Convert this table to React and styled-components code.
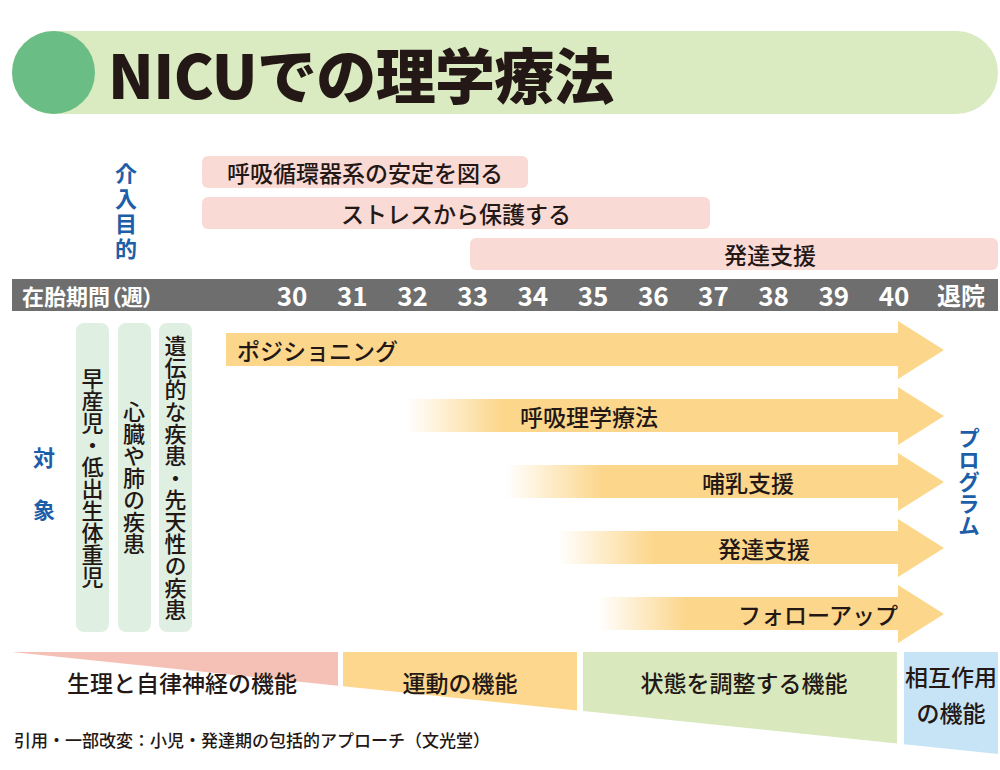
import React from 'react';
import styled, { createGlobalStyle } from 'styled-components';

const ORANGE = '#fcd68b';
const BLUE_TEXT = '#1d5ea8';

const GlobalStyle = createGlobalStyle`
  html, body {
    margin: 0;
    padding: 0;
    background: #fff;
  }
  body {
    font-family: "Noto Sans CJK JP", "Noto Sans", sans-serif;
    color: #231815;
  }
`;

const Page = styled.div`
  width: 1000px;
  height: 770px;
  padding: 31px 2px 0 12px;
  box-sizing: border-box;
  overflow: hidden;
`;

const TitleBar = styled.header`
  display: flex;
  align-items: center;
  height: 83px;
  background: #daeac1;
  border-radius: 42px;
`;

const TitleDot = styled.div`
  width: 83px;
  height: 83px;
  flex-shrink: 0;
  border-radius: 50%;
  background: #6bbd86;
`;

const Title = styled.h1`
  margin: 0 0 0 13px;
  font-size: 60px;
  font-weight: 900;
  line-height: 1;
  letter-spacing: -0.6px;
  color: #231815;
`;

const Goals = styled.section`
  display: flex;
  margin-top: 42px;
`;

const GoalLabelCol = styled.div`
  width: 188px;
  flex-shrink: 0;
  display: flex;
  align-items: center;
  padding-left: 103px;
  box-sizing: border-box;
`;

const VerticalLabel = styled.span`
  writing-mode: vertical-rl;
  font-size: 22px;
  font-weight: 700;
  line-height: 1;
  letter-spacing: ${p => p.$spacing || 0}px;
  color: ${BLUE_TEXT};
`;

const GoalBars = styled.div`
  flex: 1;
  display: flex;
  flex-direction: column;
  gap: 9px;
`;

const GoalBar = styled.div`
  margin-left: ${p => p.$left}px;
  width: ${p => p.$width}px;
  height: 32px;
  padding-left: ${p => p.$shift || 0}px;
  box-sizing: border-box;
  display: flex;
  align-items: center;
  justify-content: center;
  border-radius: 6px;
  background: #fadad5;
  font-size: 23px;
  font-weight: 500;
`;

const WeekBar = styled.div`
  margin-top: 9px;
  height: 32px;
  display: grid;
  grid-template-columns: 250px repeat(11, 60.2px) 1fr;
  align-items: center;
  background: #6e6e6e;
  color: #fff;
  font-weight: 700;
`;

const WeekTitle = styled.span`
  padding-left: 10px;
  font-size: 22px;
  font-feature-settings: "palt";
`;

const WeekCell = styled.span`
  text-align: center;
  font-size: ${p => (p.$wide ? 24 : 26)}px;
  line-height: 1;
`;

const Targets = styled.section`
  display: flex;
  margin-top: 10px;
  height: 322px;
`;

const TargetLabel = styled.div`
  width: 64px;
  flex-shrink: 0;
  display: flex;
  flex-direction: column;
  align-items: center;
  justify-content: center;
  gap: 30px;
  color: ${BLUE_TEXT};
  font-size: 22px;
  font-weight: 700;
  line-height: 1;
`;

const TargetCols = styled.div`
  display: flex;
  gap: 8.5px;
  margin-top: 2px;
  height: 309px;
`;

const TargetCol = styled.div`
  width: 33px;
  display: flex;
  align-items: center;
  justify-content: center;
  border-radius: 8px;
  background: #dff0e2;
`;

const VText = styled.span`
  writing-mode: vertical-rl;
  font-size: 22px;
  font-weight: 500;
  line-height: 1;
`;

const Arrows = styled.div`
  margin-left: 34px;
  width: 718px;
  display: flex;
  flex-direction: column;
  gap: 8px;
`;

const Arrow = styled.div`
  height: 58px;
  display: flex;
  align-items: center;
  padding-left: ${p => p.$textLeft}px;
  box-sizing: border-box;
  font-size: 23px;
  font-weight: 500;
  clip-path: polygon(
    0 12px,
    calc(100% - 46px) 12px,
    calc(100% - 46px) 0,
    100% 50%,
    calc(100% - 46px) 100%,
    calc(100% - 46px) 45px,
    0 45px
  );
  background: ${p =>
    p.$fadeFrom == null
      ? ORANGE
      : `linear-gradient(to right, rgba(252, 214, 139, 0) ${p.$fadeFrom}px, ${ORANGE} ${p.$fadeTo}px)`};
`;

const ProgramCol = styled.div`
  flex: 1;
  display: flex;
  align-items: center;
  justify-content: center;
  padding-right: 4px;
`;

const Footer = styled.section`
  display: grid;
  margin-top: 9px;
`;

const Band = styled.div`
  grid-area: 1 / 1;
  display: flex;
  height: 102px;
`;

const Segment = styled.div`
  position: relative;
  isolation: isolate;
  width: ${p => p.$width}px;
  margin-left: ${p => p.$gap}px;
  padding: ${p => p.$top}px 0 0 ${p => p.$shift || 0}px;
  box-sizing: border-box;
  display: flex;
  justify-content: center;
  text-align: center;
  font-size: 23px;
  font-weight: 500;
  line-height: ${p => p.$lineHeight}px;

  &::before {
    content: '';
    position: absolute;
    inset: 0;
    z-index: -1;
    background: ${p => p.$color};
    clip-path: polygon(0 0, 100% 0, 100% ${p => p.$r}px, 0 ${p => p.$l}px);
  }
`;

const Source = styled.p`
  grid-area: 1 / 1;
  align-self: end;
  margin: 0 0 2px 2px;
  font-size: 17px;
  font-weight: 500;
  line-height: 24px;
`;

const goals = [
  { text: '呼吸循環器系の安定を図る', left: 2, width: 326 },
  { text: 'ストレスから保護する', left: 2, width: 508 },
  { text: '発達支援', left: 270, width: 528, shift: 72 },
];

const weeks = ['30', '31', '32', '33', '34', '35', '36', '37', '38', '39', '40'];

const targets = ['早産児・低出生体重児', '心臓や肺の疾患', '遺伝的な疾患・先天性の疾患'];

const programs = [
  { text: 'ポジショニング', textLeft: 11 },
  { text: '呼吸理学療法', textLeft: 294, fadeFrom: 180, fadeTo: 276 },
  { text: '哺乳支援', textLeft: 476, fadeFrom: 280, fadeTo: 376 },
  { text: '発達支援', textLeft: 492, fadeFrom: 332, fadeTo: 428 },
  { text: 'フォローアップ', textLeft: 512, fadeFrom: 372, fadeTo: 460 },
];

const functions = [
  { text: '生理と自律神経の機能', width: 326, gap: 0, color: '#f5c0b5', shift: 14 },
  { text: '運動の機能', width: 234, gap: 5, color: '#fdd78e' },
  { text: '状態を調整する機能', width: 314, gap: 6, color: '#d9e8bd', shift: 8 },
  { text: ['相互作用', 'の機能'], width: 94, gap: 7, color: '#c7e4f7' },
];

const BAND_HEIGHT = 102;
const BAND_WIDTH = 986;

function FunctionBand() {
  let x = 0;
  return (
    <Band>
      {functions.map((f, i) => {
        x += f.gap;
        const l = (x / BAND_WIDTH) * BAND_HEIGHT;
        x += f.width;
        const r = (x / BAND_WIDTH) * BAND_HEIGHT;
        const lines = Array.isArray(f.text);
        return (
          <Segment
            key={i}
            $width={f.width}
            $gap={f.gap}
            $color={f.color}
            $l={l}
            $r={r}
            $shift={f.shift}
            $top={lines ? 6 : 14}
            $lineHeight={lines ? 36 : 32}
          >
            {lines ? (
              <span>
                {f.text[0]}
                <br />
                {f.text[1]}
              </span>
            ) : (
              f.text
            )}
          </Segment>
        );
      })}
    </Band>
  );
}

export default function App() {
  return (
    <>
      <GlobalStyle />
      <Page>
        <TitleBar>
          <TitleDot />
          <Title>NICUでの理学療法</Title>
        </TitleBar>

        <Goals>
          <GoalLabelCol>
            <VerticalLabel $spacing={3}>介入目的</VerticalLabel>
          </GoalLabelCol>
          <GoalBars>
            {goals.map(g => (
              <GoalBar key={g.text} $left={g.left} $width={g.width} $shift={g.shift}>
                {g.text}
              </GoalBar>
            ))}
          </GoalBars>
        </Goals>

        <WeekBar>
          <WeekTitle>在胎期間（週）</WeekTitle>
          {weeks.map(w => (
            <WeekCell key={w}>{w}</WeekCell>
          ))}
          <WeekCell $wide>退院</WeekCell>
        </WeekBar>

        <Targets>
          <TargetLabel>
            <span>対</span>
            <span>象</span>
          </TargetLabel>
          <TargetCols>
            {targets.map(t => (
              <TargetCol key={t}>
                <VText>{t}</VText>
              </TargetCol>
            ))}
          </TargetCols>
          <Arrows>
            {programs.map(p => (
              <Arrow key={p.text} $textLeft={p.textLeft} $fadeFrom={p.fadeFrom} $fadeTo={p.fadeTo}>
                {p.text}
              </Arrow>
            ))}
          </Arrows>
          <ProgramCol>
            <VerticalLabel>プログラム</VerticalLabel>
          </ProgramCol>
        </Targets>

        <Footer>
          <FunctionBand />
          <Source>引用・一部改変：小児・発達期の包括的アプローチ（文光堂）</Source>
        </Footer>
      </Page>
    </>
  );
}
